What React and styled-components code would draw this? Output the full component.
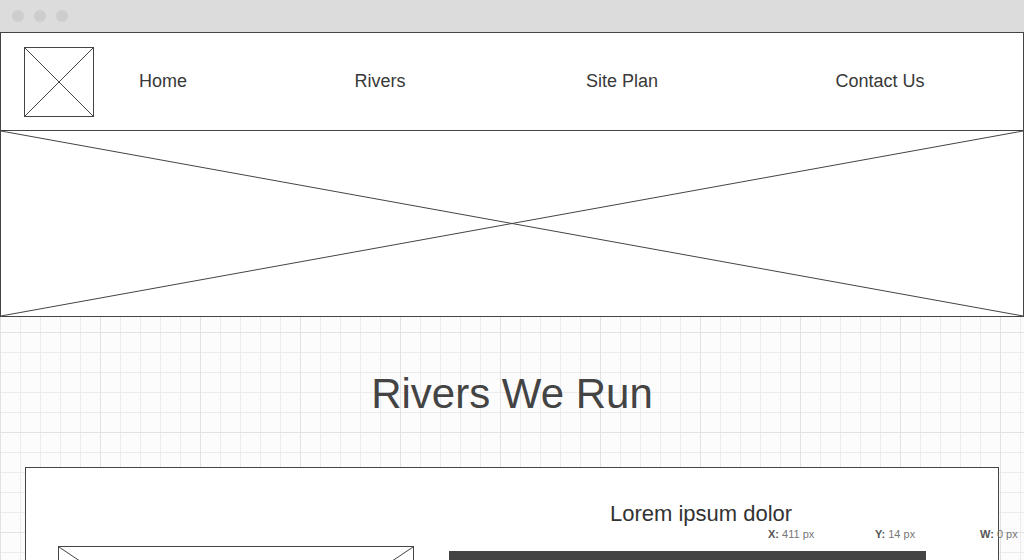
import styled, { createGlobalStyle } from "styled-components"

const GlobalStyle = createGlobalStyle`
* {
  box-sizing: border-box;
}
html, body {
  margin: 0;
  padding: 0;
  height: 560px;
  overflow: hidden;
}
body {
  font-family: "Liberation Sans", Arial, sans-serif;
  color: #444;
  background-color: #fcfcfc;
  background-image:
    linear-gradient(#e2e2e2 1px, transparent 1px),
    linear-gradient(90deg, #e2e2e2 1px, transparent 1px),
    linear-gradient(#ececec 1px, transparent 1px),
    linear-gradient(90deg, #ececec 1px, transparent 1px);
  background-size: 100px 100px, 100px 100px, 20px 20px, 20px 20px;
  background-position: 0 32px, 0 0, 0 12px, 0 0;
}
`

const Page = styled.div`
  position: relative;
  width: 1024px;
  height: 560px;
`

const TitleBar = styled.div`
  height: 32px;
  background: #dcdcdc;
  display: flex;
  align-items: center;
  gap: 10px;
  padding: 0 0 1px 12px;
`

const Dot = styled.span`
  width: 12px;
  height: 12px;
  border-radius: 50%;
  background: #cdcdcd;
`

const Header = styled.header`
  height: 99px;
  background: #fff;
  border: 1px solid #444;
  display: flex;
  align-items: center;
  padding-left: 23px;
  overflow: hidden;
`

const Placeholder = styled.div`
  position: relative;
  flex-shrink: 0;
  width: ${p => p.$w || "100%"};
  height: ${p => p.$h || "100%"};
  background: #fff;
  border: 1px solid #444;
  svg {
    display: block;
    width: 100%;
    height: 100%;
  }
`

const NavItem = styled.a`
  flex-shrink: 0;
  width: ${p => p.$w}px;
  text-align: center;
  font-size: 18px;
  color: #383838;
  text-decoration: none;
`

const Hero = styled.div`
  height: 187px;
  margin-top: -1px;
  border: 1px solid #444;
  background: #fff;
  svg {
    display: block;
    width: 100%;
    height: 100%;
  }
`

const Title = styled.h1`
  margin: 54px 0 0;
  height: 46px;
  font-size: 42px;
  font-weight: normal;
  line-height: 46px;
  text-align: center;
  color: #444;
`

const Card = styled.section`
  margin: 50px 0 0 25px;
  width: 974px;
  height: 300px;
  background: #fff;
  border: 1px solid #444;
  display: grid;
  grid-template-columns: 356px 504px;
  column-gap: 35px;
  padding: 33px 0 0 32px;
`

const LeftCol = styled.div`
  padding-top: 45px;
`

const RightCol = styled.div`
  display: flex;
  flex-direction: column;
`

const CardTitle = styled.h2`
  margin: 0;
  font-size: 22px;
  font-weight: normal;
  line-height: 26px;
  text-align: center;
  color: #333;
`

const DarkBar = styled.div`
  margin-top: 24px;
  width: 477px;
  height: 60px;
  background: #444;
`

const Readout = styled.div`
  position: absolute;
  top: 527px;
  left: 768px;
  display: flex;
  font-size: 11px;
  color: #777;
  line-height: 14px;
`

const ReadoutItem = styled.span`
  width: ${p => p.$w}px;
  white-space: nowrap;
  b {
    color: #555;
  }
`

const Cross = () => (
  <svg viewBox="0 0 100 100" preserveAspectRatio="none">
    <line x1="0" y1="0" x2="100" y2="100" stroke="#444" strokeWidth="1" vectorEffect="non-scaling-stroke" />
    <line x1="100" y1="0" x2="0" y2="100" stroke="#444" strokeWidth="1" vectorEffect="non-scaling-stroke" />
  </svg>
)

const App = () => {
  return (
    <>
      <GlobalStyle />
      <Page>
        <TitleBar>
          <Dot />
          <Dot />
          <Dot />
        </TitleBar>
        <Header>
          <Placeholder $w="70px" $h="70px">
            <Cross />
          </Placeholder>
          <NavItem $w={138}>Home</NavItem>
          <NavItem $w={296}>Rivers</NavItem>
          <NavItem $w={188}>Site Plan</NavItem>
          <NavItem $w={328}>Contact Us</NavItem>
        </Header>
        <Hero>
          <Cross />
        </Hero>
        <Title>Rivers We Run</Title>
        <Card>
          <LeftCol>
            <Placeholder $w="356px" $h="240px">
              <Cross />
            </Placeholder>
          </LeftCol>
          <RightCol>
            <CardTitle>Lorem ipsum dolor</CardTitle>
            <DarkBar />
          </RightCol>
        </Card>
        <Readout>
          <ReadoutItem $w={107}><b>X:</b> 411 px</ReadoutItem>
          <ReadoutItem $w={105}><b>Y:</b> 14 px</ReadoutItem>
          <ReadoutItem $w={50}><b>W:</b> 0 px</ReadoutItem>
        </Readout>
      </Page>
    </>
  )
}

export default App
